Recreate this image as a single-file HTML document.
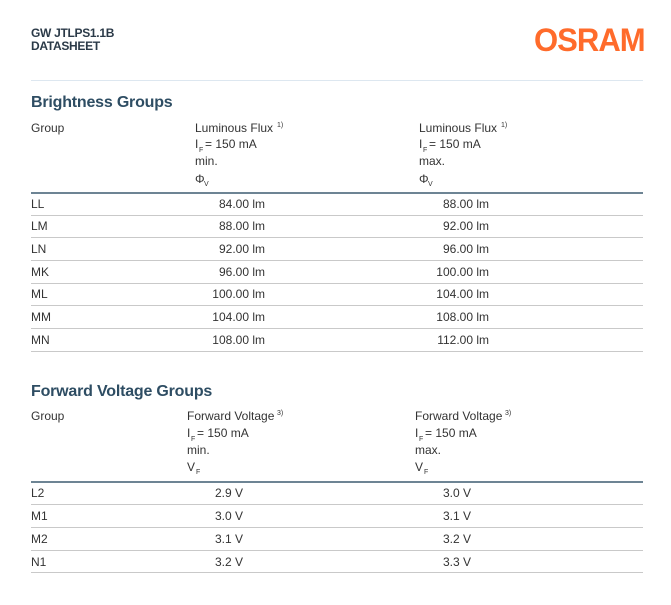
<!DOCTYPE html>
<html><head><style>
body{margin:0;width:671px;height:605px;background:#fff;font-family:"Liberation Sans",Arial,sans-serif;color:#333;position:relative;overflow:hidden}
.a{position:absolute;white-space:nowrap;font-size:12px;line-height:14px}
.h{position:absolute;font-size:12px;font-weight:bold;color:#2b3a48;line-height:13px;letter-spacing:-0.3px}
.t{position:absolute;font-size:16px;font-weight:bold;color:#2e4d63;letter-spacing:-0.2px}
.l{position:absolute;left:31px;width:612px;height:1px;background:#c9c9c9}
.k{position:absolute;left:31px;width:612px;height:2px;background:#6d8494}
.s{position:absolute;font-size:7px;line-height:7px}
.r{text-align:right;width:80px}
</style></head><body>
<div class="h" style="left:31px;top:27px">GW JTLPS1.1B<br>DATASHEET</div>
<div style="position:absolute;left:534px;top:22px;font-size:32px;line-height:36px;font-weight:bold;color:#ff6b2b;letter-spacing:-1px;transform:scaleX(0.97);transform-origin:left top">OSRAM</div>
<div style="position:absolute;left:31px;top:80px;width:612px;height:1px;background:#dde7f0"></div>

<div class="t" style="left:31px;top:94px">Brightness Groups</div>
<div class="a" style="left:31px;top:121px">Group</div>

<div class="a" style="left:195px;top:121px">Luminous Flux</div><div class="s" style="left:277px;top:122px">1)</div>
<div class="a" style="left:195px;top:137px">I</div><div class="s" style="left:199px;top:147px">F</div><div class="a" style="left:205px;top:137px">= 150 mA</div>
<div class="a" style="left:195px;top:154px">min.</div>
<div class="a" style="left:195px;top:172px">Φ</div><div class="s" style="left:204px;top:181px">V</div>

<div class="a" style="left:419px;top:121px">Luminous Flux</div><div class="s" style="left:501px;top:122px">1)</div>
<div class="a" style="left:419px;top:137px">I</div><div class="s" style="left:423px;top:147px">F</div><div class="a" style="left:429px;top:137px">= 150 mA</div>
<div class="a" style="left:419px;top:154px">max.</div>
<div class="a" style="left:419px;top:172px">Φ</div><div class="s" style="left:428px;top:181px">V</div>
<div class="k" style="top:192px"></div>

<div class="a" style="left:31px;top:197px">LL</div><div class="a r" style="left:185px;top:197px">84.00 lm</div><div class="a r" style="left:409px;top:197px">88.00 lm</div>
<div class="l" style="top:215px"></div>
<div class="a" style="left:31px;top:219px">LM</div><div class="a r" style="left:185px;top:219px">88.00 lm</div><div class="a r" style="left:409px;top:219px">92.00 lm</div>
<div class="l" style="top:237px"></div>
<div class="a" style="left:31px;top:242px">LN</div><div class="a r" style="left:185px;top:242px">92.00 lm</div><div class="a r" style="left:409px;top:242px">96.00 lm</div>
<div class="l" style="top:260px"></div>
<div class="a" style="left:31px;top:265px">MK</div><div class="a r" style="left:185px;top:265px">96.00 lm</div><div class="a r" style="left:409px;top:265px">100.00 lm</div>
<div class="l" style="top:283px"></div>
<div class="a" style="left:31px;top:287px">ML</div><div class="a r" style="left:185px;top:287px">100.00 lm</div><div class="a r" style="left:409px;top:287px">104.00 lm</div>
<div class="l" style="top:305px"></div>
<div class="a" style="left:31px;top:310px">MM</div><div class="a r" style="left:185px;top:310px">104.00 lm</div><div class="a r" style="left:409px;top:310px">108.00 lm</div>
<div class="l" style="top:328px"></div>
<div class="a" style="left:31px;top:333px">MN</div><div class="a r" style="left:185px;top:333px">108.00 lm</div><div class="a r" style="left:409px;top:333px">112.00 lm</div>
<div class="l" style="top:351px"></div>

<div class="t" style="left:31px;top:383px">Forward Voltage Groups</div>
<div class="a" style="left:31px;top:409px">Group</div>

<div class="a" style="left:187px;top:409px">Forward Voltage</div><div class="s" style="left:277px;top:410px">3)</div>
<div class="a" style="left:187px;top:426px">I</div><div class="s" style="left:191px;top:436px">F</div><div class="a" style="left:197px;top:426px">= 150 mA</div>
<div class="a" style="left:187px;top:443px">min.</div>
<div class="a" style="left:187px;top:460px">V</div><div class="s" style="left:196px;top:469px">F</div>

<div class="a" style="left:415px;top:409px">Forward Voltage</div><div class="s" style="left:505px;top:410px">3)</div>
<div class="a" style="left:415px;top:426px">I</div><div class="s" style="left:419px;top:436px">F</div><div class="a" style="left:425px;top:426px">= 150 mA</div>
<div class="a" style="left:415px;top:443px">max.</div>
<div class="a" style="left:415px;top:460px">V</div><div class="s" style="left:424px;top:469px">F</div>
<div class="k" style="top:481px"></div>

<div class="a" style="left:31px;top:486px">L2</div><div class="a" style="left:215px;top:486px">2.9 V</div><div class="a" style="left:443px;top:486px">3.0 V</div>
<div class="l" style="top:504px"></div>
<div class="a" style="left:31px;top:509px">M1</div><div class="a" style="left:215px;top:509px">3.0 V</div><div class="a" style="left:443px;top:509px">3.1 V</div>
<div class="l" style="top:527px"></div>
<div class="a" style="left:31px;top:532px">M2</div><div class="a" style="left:215px;top:532px">3.1 V</div><div class="a" style="left:443px;top:532px">3.2 V</div>
<div class="l" style="top:550px"></div>
<div class="a" style="left:31px;top:555px">N1</div><div class="a" style="left:215px;top:555px">3.2 V</div><div class="a" style="left:443px;top:555px">3.3 V</div>
<div class="l" style="top:572px"></div>
</body></html>
